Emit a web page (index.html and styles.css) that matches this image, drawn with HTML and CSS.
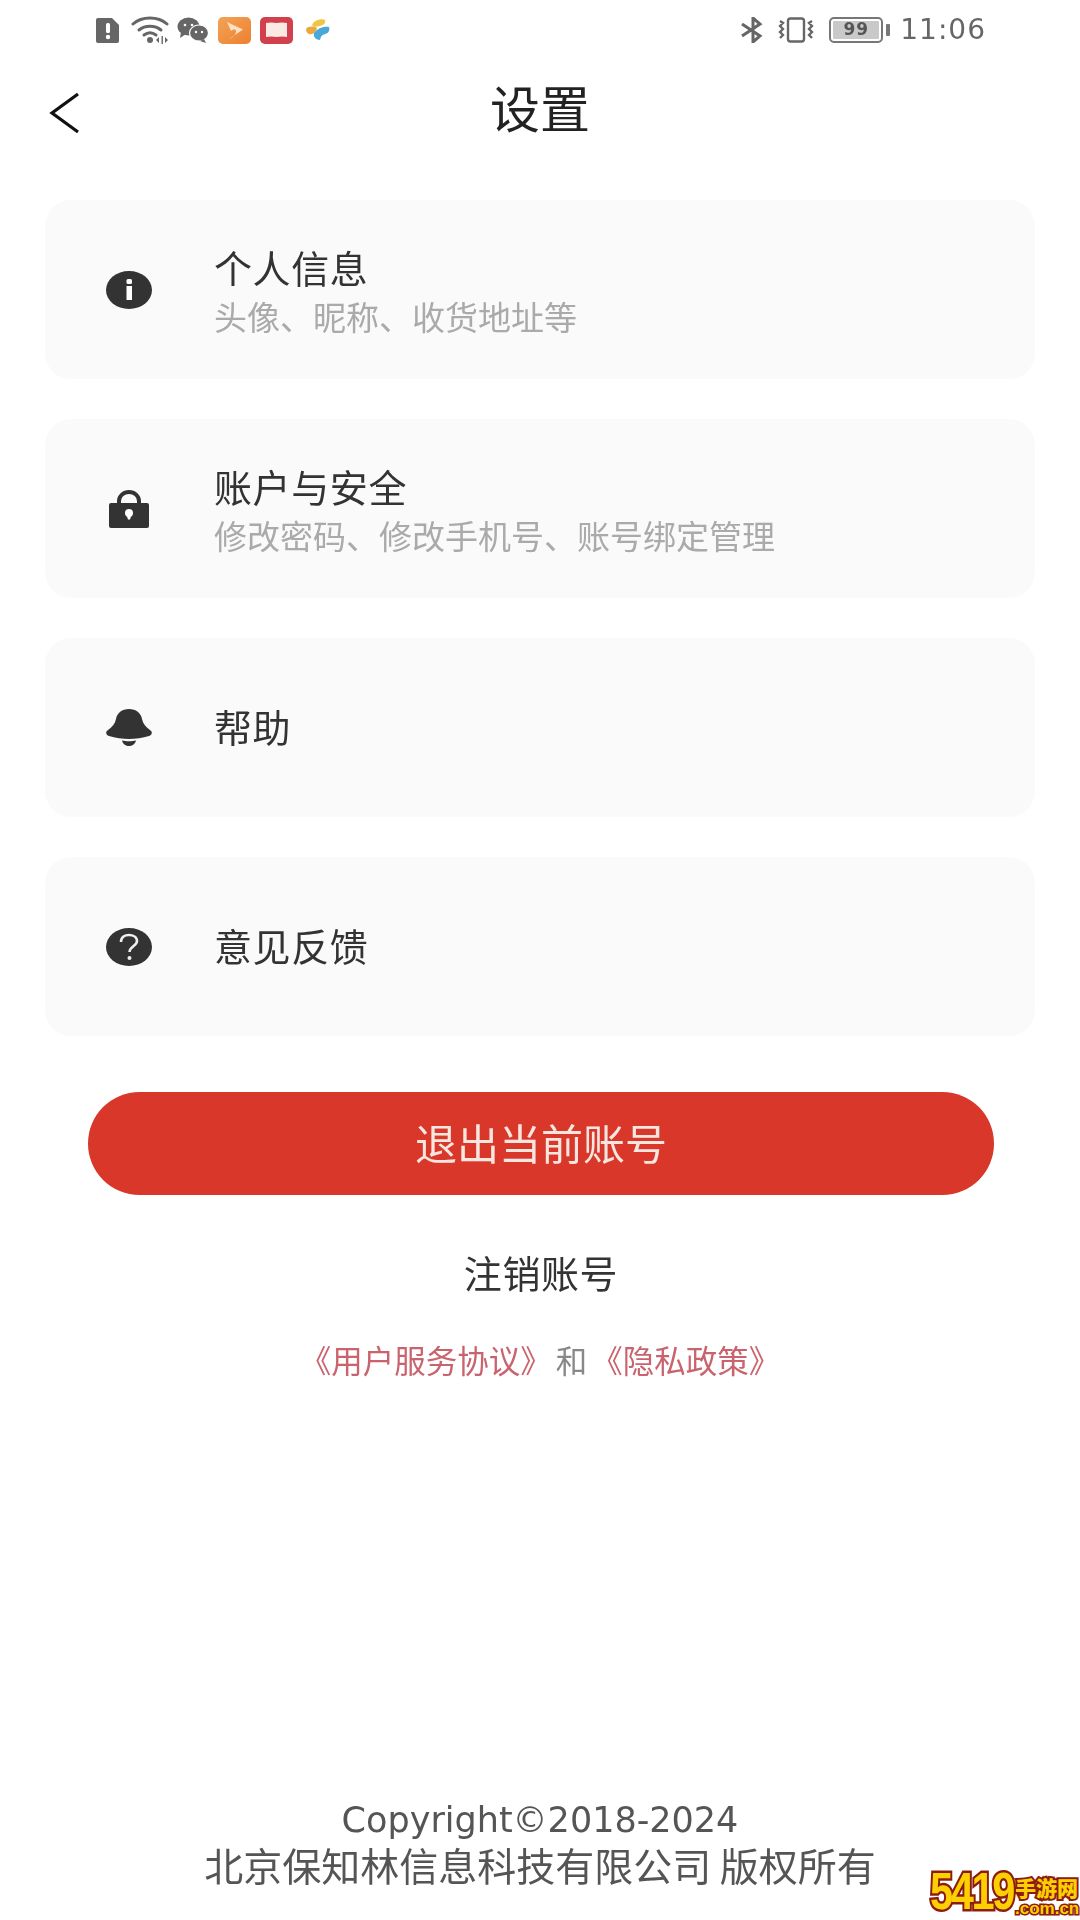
FILE: index.html
```html
<!DOCTYPE html>
<html lang="zh-CN">
<head>
<meta charset="utf-8">
<title>设置</title>
<link rel="stylesheet" href="styles.css">
</head>
<body>
<div class="page">
  <div class="soft">
  <header class="status">
    <div class="status-left">
      <svg class="ic-sim" viewBox="0 0 26 26"><path d="M3 1h14l7 7v16a2 2 0 0 1-2 2H3a2 2 0 0 1-2-2V3a2 2 0 0 1 2-2z" fill="#666"/><rect x="11" y="6" width="4" height="10" rx="1.5" fill="#fff"/><circle cx="13" cy="20" r="2.2" fill="#fff"/></svg>
      <svg class="ic-wifi" viewBox="0 0 40 28"><g fill="none" stroke="#666" stroke-width="3" stroke-linecap="round"><path d="M2 8C11 0 27 0 36 8"/><path d="M8 14c6-5 16-5 22 0"/><path d="M13 19c4-3 8-3 12 0"/></g><circle cx="19" cy="24" r="3" fill="#666"/><path d="M28 21l-3 3 3 3zM34 21l3 3-3 3z" fill="#666"/><rect x="30.500" y="20" width="1.400" height="8" fill="#666"/></svg>
      <svg class="ic-wechat" viewBox="0 0 32 26"><ellipse cx="11.500" cy="9.500" rx="11" ry="9" fill="#666"/><path d="M4 15l-1 6 6-4z" fill="#666"/><ellipse cx="22" cy="16" rx="9.500" ry="8" fill="#666" stroke="#fff" stroke-width="1.200"/><path d="M27 22l2 4-6-2z" fill="#666"/><circle cx="8" cy="8" r="1.300" fill="#fff"/><circle cx="15" cy="8" r="1.300" fill="#fff"/><circle cx="19" cy="15" r="1.200" fill="#fff"/><circle cx="25" cy="15" r="1.200" fill="#fff"/></svg>
      <svg class="ic-app" viewBox="0 0 33 27"><defs><linearGradient id="orange" x1="0" y1="0" x2="1" y2="1"><stop offset="0" stop-color="#f2a356"/><stop offset="1" stop-color="#ee8030"/></linearGradient></defs><rect width="33" height="27" rx="5" fill="url(#orange)"/><path d="M9 5l16 7.500L11 22c5-2 7-5 7-8 0-2-3-2-5 0z" fill="#fde0c2"/></svg>
      <svg class="ic-app" viewBox="0 0 33 27"><rect width="33" height="27" rx="5" fill="#d23f4d"/><path d="M6 6q5-1 10.500 0Q22 5 27 6v14q-5-1-10.500 0Q11 19 6 20z" fill="#fbe9e4"/></svg>
      <svg class="ic-bird" viewBox="0 0 26 24"><path d="M7 7c2-5 10-7 13-5 1 3-1 5-5 6-3 .5-6 2-8-1z" fill="#f0c544"/><path d="M1 11c2-3 8-3 11-1-1 4-4 7-8 6-2-.5-3-3-3-5z" fill="#eba93c"/><path d="M9 15c3-4 9-7 15-6 1 3 0 6-4 7-3 1-4 2-5 6-4 0-7-3-6-7z" fill="#4aa8d8"/></svg>
    </div>
    <div class="status-right">
      <svg class="ic-bt" viewBox="0 0 26 26"><path d="M2 7l18 12-7 6V1l7 6L2 19" fill="none" stroke="#666" stroke-width="3"/></svg>
      <svg class="ic-vib" viewBox="0 0 40 26"><rect x="12" y="1.500" width="16" height="23" rx="2.500" fill="none" stroke="#666" stroke-width="2.400"/><path d="M4 4l3 2-3 3 3 3-3 3 3 3-3 3M36 4l-3 2 3 3-3 3 3 3-3 3 3 3" fill="none" stroke="#666" stroke-width="2.400"/></svg>
      <div class="battery"><span class="battery-body"><span class="battery-level">99</span></span><span class="battery-tip"></span></div>
      <span class="clock">11:06</span>
    </div>
  </header>

  <nav class="nav">
    <svg class="back" viewBox="0 0 32 44"><path d="M29 3L3 22l26 19" fill="none" stroke="#111" stroke-width="3.200"/></svg>
    <h1 class="nav-title">设置</h1>
  </nav>

  <main class="cards">
    <section class="card">
      <svg class="card-icon" viewBox="0 0 46 38"><ellipse cx="23" cy="19" rx="23" ry="19" fill="#333"/><rect x="20.500" y="15" width="5.500" height="14" fill="#fff"/><rect x="20.500" y="8" width="5.500" height="5" rx="1.500" fill="#fff"/></svg>
      <div class="card-text"><div class="card-title">个人信息</div><div class="card-sub">头像、昵称、收货地址等</div></div>
    </section>
    <section class="card">
      <svg class="card-icon" viewBox="0 0 46 38"><rect x="3" y="13" width="40" height="25" rx="2" fill="#333"/><path d="M13 14V11a10 9 0 0 1 20 0v3" fill="none" stroke="#333" stroke-width="4"/><circle cx="23" cy="23" r="4" fill="#fff"/><path d="M20.500 25h5l-1.500 4.500h-2z" fill="#fff"/></svg>
      <div class="card-text"><div class="card-title">账户与安全</div><div class="card-sub">修改密码、修改手机号、账号绑定管理</div></div>
    </section>
    <section class="card">
      <svg class="card-icon" viewBox="0 0 46 38"><path d="M23 0c7 0 12 4 13 10 1 5 4 8 8 11 3 2 2 5-1 6-6 2-14 3-20 3s-14-1-20-3c-3-1-4-4-1-6 4-3 7-6 8-11C11 4 16 0 23 0z" fill="#333"/><path d="M16 31.500c4 1 10 1 14 0-1 4-4 5.500-7 5.500s-6-1.500-7-5.500z" fill="#333"/></svg>
      <div class="card-text"><div class="card-title card-title-solo">帮助</div></div>
    </section>
    <section class="card">
      <svg class="card-icon" viewBox="0 0 46 38"><ellipse cx="23" cy="19" rx="23" ry="19" fill="#333"/><path d="M15 14c0-5 4-7 8-7s8 2 8 6c0 5-7 5-7.500 11" fill="none" stroke="#eee" stroke-width="2.600"/><circle cx="23.500" cy="30" r="2" fill="#eee"/></svg>
      <div class="card-text"><div class="card-title card-title-solo">意见反馈</div></div>
    </section>
  </main>

  <button class="logout"><span class="logout-label">退出当前账号</span></button>
  <div class="cancel">注销账号</div>
  <div class="links"><span class="link">《用户服务协议》</span> 和 <span class="link">《隐私政策》</span></div>

  <footer class="footer">
    <div class="copy">Copyright©2018-2024</div>
    <div class="company">北京保知林信息科技有限公司 版权所有</div>
  </footer>
  </div>

  <div class="mark">
    <span class="mark-num">5419</span>
    <span class="mark-side"><span class="mark-cn">手游网</span><span class="mark-dom">.com.cn</span></span>
  </div>
</div>
</body>
</html>
```

FILE: styles.css
```css
* { box-sizing: border-box; }
html, body { margin: 0; padding: 0; background: #fff; }
.page {
  position: relative;
  width: 1080px;
  height: 1920px;
  overflow: hidden;
  background: #fff;
  color: #333;
  font-family: "Noto Sans CJK SC", "Noto Sans", sans-serif;
}
.soft {
  width: 100%;
  height: 100%;
  display: flex;
  flex-direction: column;
  align-items: center;
  filter: blur(0.6px);
}
.status {
  width: 100%;
  height: 60px;
  padding: 16px 94px 0 95px;
  display: flex;
  justify-content: space-between;
  align-items: flex-start;
}
.status-left, .status-right { display: flex; align-items: center; height: 28px; }
.ic-sim { width: 26px; height: 26px; }
.ic-wifi { width: 40px; height: 28px; margin-left: 10px; }
.ic-wechat { width: 32px; height: 26px; margin-left: 6px; }
.ic-app { width: 33px; height: 27px; margin-left: 9px; }
.ic-app + .ic-app { margin-left: 9px; }
.ic-bird { width: 26px; height: 24px; margin-left: 12px; }
.ic-bt { width: 26px; height: 26px; }
.ic-vib { width: 40px; height: 26px; margin-left: 10px; }
.battery { display: flex; align-items: center; margin-left: 13px; }
.battery-body {
  width: 54px;
  height: 26px;
  padding: 2px;
  border: 2.500px solid #777;
  border-radius: 5px;
  display: flex;
}
.battery-level {
  flex: 1;
  background: #c9c9c9;
  color: #555;
  border-radius: 1px;
  font: 700 17px/17px "DejaVu Sans", sans-serif;
  letter-spacing: 1px;
  text-align: center;
}
.battery-tip { width: 4px; height: 12px; margin-left: 3px; background: #777; border-radius: 1px; }
.clock {
  margin-left: 10px;
  font: 28px/28px "DejaVu Sans", sans-serif;
  letter-spacing: 1px;
  color: #666;
}
.nav {
  position: relative;
  width: 100%;
  height: 92px;
  display: flex;
  justify-content: center;
  align-items: center;
}
.back { position: absolute; left: 49px; top: 31px; width: 32px; height: 44px; }
.nav-title { margin: 0; font-size: 50px; line-height: 64px; font-weight: 400; color: #222; }
.cards {
  width: 990px;
  margin-top: 48px;
  display: flex;
  flex-direction: column;
  gap: 40px;
}
.card {
  height: 179px;
  padding-left: 61px;
  display: flex;
  align-items: center;
  background: #fafafa;
  border-radius: 26px;
}
.card-icon { width: 46px; height: 38px; flex: none; }
.card-text { margin-left: 62px; padding-top: 3px; }
.card-title { font-size: 38px; line-height: 50px; letter-spacing: 0.6px; font-weight: 400; color: #333; }
.card-title-solo { margin-top: -6px; }
.card-sub { font-size: 33px; line-height: 48px; color: #aaa; }
.logout {
  width: 906px;
  height: 103px;
  margin-top: 56px;
  margin-left: 2px;
  padding: 0 0 4px;
  border: none;
  border-radius: 52px;
  background: #d9372a;
  color: #f6e6e0;
  font: 400 42px/1 "Noto Sans CJK SC", sans-serif;
}
.logout-label { display: block; }
.cancel { margin-top: 52px; margin-left: 2px; font-size: 38px; line-height: 50px; letter-spacing: 0.6px; color: #333; }
.links { margin-top: 42px; font-size: 31.500px; line-height: 40px; word-spacing: -3px; color: #888; }
.link { color: #c9646f; }
.footer {
  margin-top: auto;
  padding-bottom: 33px;
  text-align: center;
  color: #555;
}
.copy { font: 35px/42px "DejaVu Sans", sans-serif; }
.company { font-size: 39px; line-height: 46px; }
.mark {
  position: absolute;
  right: 0;
  bottom: 0;
  width: 150px;
  height: 56px;
  display: flex;
  align-items: flex-end;
}
.mark-num {
  flex: none;
  width: 85px;
  height: 54px;
  font: 700 52px/50px "Liberation Sans", sans-serif;
  letter-spacing: -3px;
  color: #fcd000;
  -webkit-text-stroke: 5px #8c1c10;
  paint-order: stroke fill;
  transform: scaleX(0.8);
  transform-origin: left bottom;
}
.mark-side { display: flex; flex-direction: column; align-items: flex-start; width: 65px; padding-bottom: 2px; }
.mark-cn {
  font: 900 21px/26px "Noto Sans CJK SC", sans-serif;
  color: #fcd000;
  -webkit-text-stroke: 4px #8c1c10;
  paint-order: stroke fill;
}
.mark-dom {
  font: 700 17px/18px "Liberation Sans", sans-serif;
  color: #fcd000;
  -webkit-text-stroke: 3px #8c1c10;
  paint-order: stroke fill;
}
```
